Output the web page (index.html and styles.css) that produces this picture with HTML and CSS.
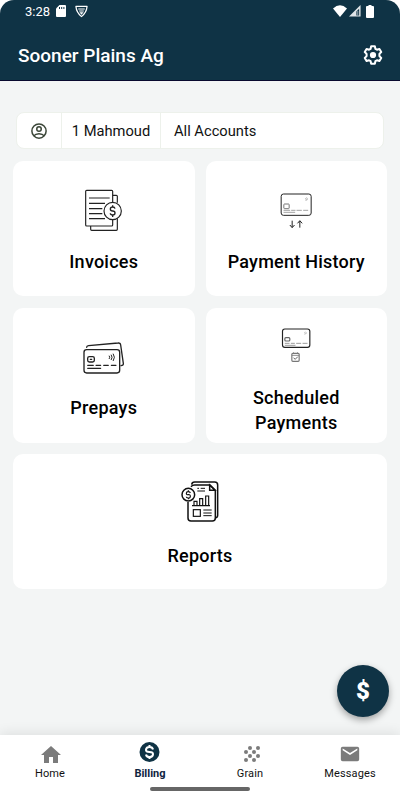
FILE: index.html
```html
<!DOCTYPE html>
<html lang="en">
<head>
  <meta charset="UTF-8">
  <title>Sooner Plains Ag - Billing</title>
  <meta name="viewport" content="width=device-width, initial-scale=1">
  <link rel="stylesheet" href="styles.css">
</head>
<body>

  <header class="header">
    <div class="status-bar">
      <span class="time">3:28</span>
      <svg class="sd" width="10" height="12" viewBox="0 0 10 12"><path d="M3.5 0H9a1 1 0 0 1 1 1v10a1 1 0 0 1-1 1H1a1 1 0 0 1-1-1V3.5z" fill="#fff"/><path d="M3.5 2v2M5.7 2v2M7.9 2v2" stroke="#0f3345"/></svg>
      <svg class="shield" width="13" height="13" viewBox="0 0 14 13"><path d="M1 1h12Q12.500 7.500 7 12 1.500 7.500 1 1z" fill="none" stroke="#fff" stroke-width="1.300" stroke-linejoin="round"/><path d="M3.500 3.800h7M4.500 6h5" stroke="#fff" stroke-width="1.200"/><path d="M4.800 7.300h4.400L7 10z" fill="#fff"/></svg>
      <div class="signals">
        <svg width="14" height="12" viewBox="0 0 14 12"><path d="M0 3.500Q7-3 14 3.500L7 12z" fill="#fff"/></svg>
        <svg width="12" height="12" viewBox="0 0 13 13"><path d="M12.500 0v12.500H0z" fill="#dfe4e7"/><path d="M11 4v7.500H8V7z" fill="#0f3345"/><path d="M9.500 6.500v5" stroke="#aab5bc"/></svg>
        <svg class="battery" width="8" height="13" viewBox="0 0 8 13"><path d="M2.500 0h3v1H7a1 1 0 0 1 1 1v10a1 1 0 0 1-1 1H1a1 1 0 0 1-1-1V2a1 1 0 0 1 1-1h1.500z" fill="#fff"/></svg>
      </div>
    </div>
    <div class="title-bar">
      <h1>Sooner Plains Ag</h1>
      <svg width="22" height="22" viewBox="0 0 24 24" fill="none" stroke="#fff" stroke-width="2.200" stroke-linejoin="round"><path d="M10 2.500h4l.6 2.700 1.700 1 2.700-.8 2 3.400-2 2v2.400l2 2-2 3.400-2.700-.8-1.700 1-.6 2.700h-4l-.6-2.700-1.700-1-2.700.8-2-3.400 2-2v-2.400l-2-2 2-3.400 2.700.8 1.700-1z"/><circle cx="12" cy="12" r="3.400" fill="#fff" stroke="none"/></svg>
    </div>
  </header>

  <main>
    <div class="account-bar">
      <div class="avatar">
        <svg width="18" height="18" viewBox="0 0 24 24" fill="none" stroke="#3b4638" stroke-width="2"><circle cx="12" cy="12" r="9.500"/><circle cx="12" cy="9.300" r="3"/><path d="M5 18.500c3-4 11-4 14 0"/></svg>
      </div>
      <div class="user">1 Mahmoud</div>
      <div class="accounts">All Accounts</div>
    </div>

    <div class="cards">
      <div class="card">
        <svg class="card-icon" viewBox="-3 0 210 180" fill="none" stroke="#222" stroke-width="3.500">
          <path d="M62 138v10q0 3 3 3h74q3 0 3-3v-33M142 68V49q0-3-3-3h-11"/>
          <path d="M128 66V34q0-3-3-3H50q-3 0-3 3v101q0 3 3 3h75q3 0 3-3v-16"/>
          <path d="M57 54h62M57 70h48M57 86h40M57 101h40M57 116h48"/>
          <circle cx="128" cy="93" r="26"/>
          <path d="M135 86q-1-5-7-5-7 0-7 6t7 6 7 6-7 6-7-5M128 76v5M128 105v6" stroke-width="4"/>
        </svg>
        <h2>Invoices</h2>
      </div>

      <div class="card">
        <svg class="card-icon" viewBox="-10.5 0 210 180" fill="none" stroke="#222" stroke-width="3">
          <rect x="50" y="42" width="90" height="64" rx="7"/>
          <rect x="58" y="72" width="16" height="14" rx="2" stroke="#777"/>
          <path d="M57 91h20M80 91h13M96 91h16M116 91h15M57 97h35" stroke="#777" stroke-width="2"/>
          <path d="M122 55l4 3-4 3M126 52q6 5 0 10" stroke="#999" stroke-width="2"/>
          <path d="M83 122v20M76 135l7 8 7-8M106 143v-20M99 130l7-8 7 8"/>
        </svg>
        <h2>Payment History</h2>
      </div>

      <div class="card">
        <svg class="card-icon" viewBox="-3 -12 210 180" fill="none" stroke="#222" stroke-width="4" stroke-linecap="round">
          <path d="M50 49q0-4 6-5l88-8q7-1 8 6l8 55q1 6-7 7"/>
          <rect x="42" y="56" width="107" height="70" rx="8"/>
          <rect x="53" y="77" width="20" height="16" rx="5"/>
          <path d="M61 85h4"/>
          <path d="M118 75q3 4 0 8M124 72q5 7 0 14M130 69q7 10 0 20" stroke-width="3"/>
          <path d="M53 103h17M78 103h14M101 103h14M124 103h14M53 112h39" stroke-width="3.500"/>
        </svg>
        <h2>Prepays</h2>
      </div>

      <div class="card tall">
        <svg class="card-icon" viewBox="-10.5 1 210 180" fill="none" stroke="#222" stroke-width="3.500">
          <rect x="54" y="40" width="82" height="55" rx="7"/>
          <rect x="61" y="66" width="15" height="10" rx="3" stroke="#666"/>
          <path d="M61 83h14M79 83h12M95 83h15M114 83h15M61 89h32" stroke="#888" stroke-width="2.500"/>
          <path d="M119 50l4 3-4 3M123 48q6 4 0 8" stroke="#aaa" stroke-width="2"/>
          <rect x="82" y="113" width="22" height="24" rx="3" stroke="#777"/>
          <path d="M82 119h22M87 110v5M99 110v5" stroke="#777" stroke-width="2.500"/>
          <path d="M87 126l5 5 8-8" stroke="#444" stroke-width="2.500"/>
        </svg>
        <h2>Scheduled<br>Payments</h2>
      </div>

      <div class="card wide">
        <svg class="card-icon" viewBox="-15 9 210 180" fill="none" stroke="#111" stroke-width="4.500">
          <path d="M65 44q1-8 9-8h60q9 0 9 9v91q0 7-6 7"/>
          <path d="M54 96v48q0 9 9 9h64q9 0 9-9V61l-16-16H74q-7 0-11 5"/>
          <path d="M119 45v16h16z"/>
          <circle cx="55" cy="74" r="19" fill="#fff"/>
          <path d="M61 69q-1-4-6-4-6 0-6 5t6 4 6 5-6 5-6-4M55 61v4M55 84v4" stroke-width="3.500"/>
          <path d="M82 55h5M92 55h13M82 63h23" stroke-width="3"/>
          <path d="M66 107h54M72 107V94h9v13M89 107V86h9v21M107 107V78h9v29" stroke-width="3.500"/>
          <rect x="70" y="119" width="21" height="20" stroke-width="3.500"/>
          <path d="M100 120h25M100 129h25M100 137h25" stroke-width="3"/>
        </svg>
        <h2>Reports</h2>
      </div>
    </div>
  </main>

  <button class="pay-btn">$</button>

  <nav class="tabs">
    <a class="tab">
      <svg width="24" height="24" viewBox="-1 -1 24 24" fill="#7b7b7b"><path d="M10 20v-6h4v6h5v-8h3L12 3 2 12h3v8z"/></svg>
      <span>Home</span>
    </a>
    <a class="tab active">
      <svg width="24" height="24" viewBox="0.500 0 24 24"><circle cx="12" cy="10" r="10" fill="#0f3345"/><path d="M15.500 7.500q-.4-2.500-3.500-2.500T8.500 7.500t3.500 2.500 3.500 2.500-3.500 2.500-3.500-2.500M12 2.900V5M12 15v2.100" fill="none" stroke="#fff" stroke-width="2"/></svg>
      <span>Billing</span>
    </a>
    <a class="tab">
      <svg width="24" height="24" viewBox="-2 0 24 24" fill="#7b7b7b"><circle cx="6" cy="10" r="2"/><circle cx="6" cy="18" r="2"/><circle cx="10" cy="6" r="2"/><circle cx="10" cy="14" r="2"/><circle cx="14" cy="10" r="2"/><circle cx="14" cy="18" r="2"/><circle cx="18" cy="6" r="2"/><circle cx="18" cy="14" r="2"/></svg>
      <span>Grain</span>
    </a>
    <a class="tab">
      <svg width="22" height="22" viewBox="0 0 24 24" fill="#7b7b7b"><path d="M20 4H4a2 2 0 0 0-2 2v12a2 2 0 0 0 2 2h16a2 2 0 0 0 2-2V6a2 2 0 0 0-2-2zm0 4-8 5-8-5V6l8 5 8-5z"/></svg>
      <span>Messages</span>
    </a>
    <div class="home-line"></div>
  </nav>

</body>
</html>
```
FILE: styles.css
```css
* {
  box-sizing: border-box;
}

body {
  margin: 0;
  height: 800px;
  display: flex;
  flex-direction: column;
  background: #fff;
  font-family: Roboto, sans-serif;
  color: #111;
  overflow: hidden;
}

svg {
  display: block;
  flex: none;
}

h1, h2 {
  margin: 0;
  font-weight: 500;
}

/* header */
.header {
  height: 81px;
  background: #0f3345;
  border-bottom: 1px solid #09092f;
  border-radius: 14px 14px 0 0;
  color: #fff;
}

.status-bar {
  display: flex;
  align-items: center;
  height: 22px;
  padding: 0 26px 0 25px;
}

.time {
  width: 31px;
  font-size: 13px;
}

.shield {
  margin-left: 9px;
}

.signals {
  display: flex;
  align-items: center;
  gap: 2px;
  margin-left: auto;
}

.battery {
  margin-left: 3px;
}

.title-bar {
  display: flex;
  align-items: center;
  justify-content: space-between;
  height: 58px;
  padding: 8px 16px 0 18px;
}

h1 {
  font-size: 19px;
}

/* content */
main {
  flex: 1;
  padding: 31px 13px 0;
  background: #f3f5f5;
}

.account-bar {
  display: flex;
  align-items: stretch;
  height: 37px;
  margin: 0 3px;
  background: #fff;
  border: 1px solid #edf1eb;
  border-radius: 8px;
  font-size: 14.700px;
}

.account-bar div {
  display: flex;
  align-items: center;
}

.avatar {
  width: 45px;
  padding-left: 13px;
  border-right: 1px solid #edf1eb;
}

.user {
  width: 99px;
  justify-content: center;
  border-right: 1px solid #edf1eb;
}

.accounts {
  padding-left: 13px;
}

.cards {
  display: grid;
  grid-template-columns: 1fr 1fr;
  gap: 11.500px 11px;
  margin-top: 12px;
}

.card {
  display: flex;
  flex-direction: column;
  align-items: center;
  height: 135px;
  padding-top: 19px;
  background: #fff;
  border-radius: 10px;
  text-align: center;
}

.card-icon {
  width: 70px;
  height: 60px;
}

.card h2 {
  margin-top: 8.500px;
  font-size: 18px;
  line-height: 25px;
  letter-spacing: 0.24px;
  color: #000;
}

.tall {
  padding-top: 8px;
}

.card.tall h2 {
  margin-top: 9px;
}

.wide {
  grid-column: 1 / 3;
}

.card.wide h2 {
  margin-top: 10px;
}

/* floating button */
.pay-btn {
  position: absolute;
  right: 11px;
  top: 665px;
  width: 52px;
  height: 52px;
  padding: 0;
  border: none;
  border-radius: 50%;
  background: #0f3345;
  box-shadow: 0 3px 7px rgba(0,0,0,0.35);
  color: #fff;
  font: 900 24px Roboto, sans-serif;
}

/* bottom tabs */
.tabs {
  position: relative;
  display: flex;
  height: 65px;
  background: #fff;
  box-shadow: 0 -2px 12px rgba(0,0,0,0.09);
}

.tab {
  flex: 1;
  display: flex;
  flex-direction: column;
  align-items: center;
  padding-top: 7px;
  font-size: 11px;
  letter-spacing: 0.12px;
}

.tab svg {
  height: 24px;
}

.tab span {
  margin-top: 1px;
  line-height: 14px;
}

.active {
  color: #0f2440;
  font-weight: bold;
  letter-spacing: 0;
}

.home-line {
  position: absolute;
  left: 150px;
  bottom: 9px;
  width: 100px;
  height: 4px;
  border-radius: 2px;
  background: #666;
}
```
